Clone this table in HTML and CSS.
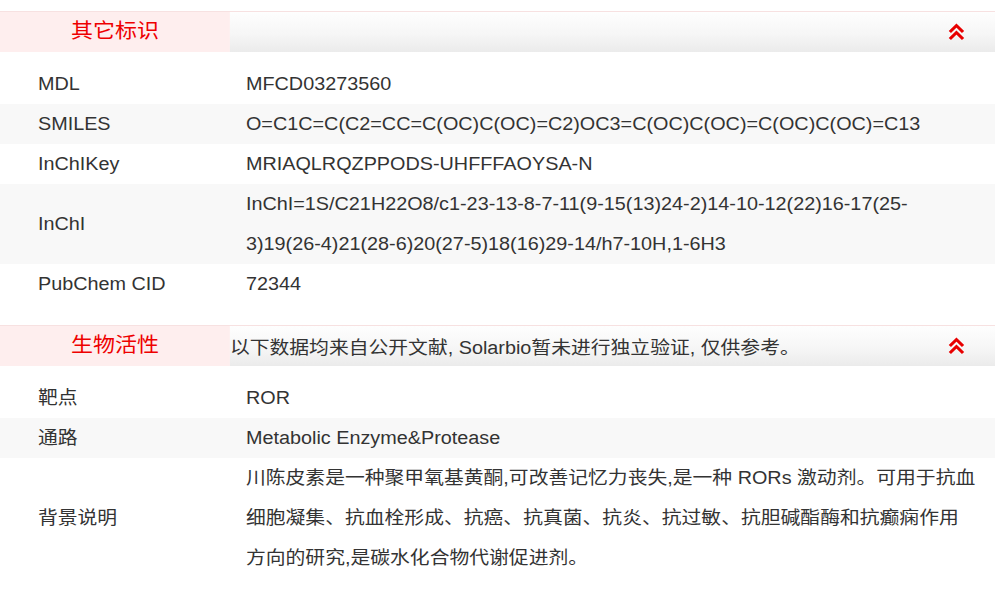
FILE: index.html
```html
<!DOCTYPE html>
<html lang="zh-CN">
<head>
<meta charset="utf-8">
<title>其它标识</title>
<link rel="stylesheet" href="styles.css">
</head>
<body>
<div class="page">
  <section class="sec">
    <div class="sec-head">
      <div class="sec-title">其它标识</div>
      <div class="sec-bar">
        <span class="sec-note"></span>
        <svg class="toggle" viewBox="0 0 15 18" width="15" height="18"><polyline points="1.5,9 7.5,2.5 13.5,9"/><polyline points="1.5,16 7.5,9.5 13.5,16"/></svg>
      </div>
    </div>
    <div class="rows">
      <div class="row"><div class="k">MDL</div><div class="v">MFCD03273560</div></div>
      <div class="row"><div class="k">SMILES</div><div class="v">O=C1C=C(C2=CC=C(OC)C(OC)=C2)OC3=C(OC)C(OC)=C(OC)C(OC)=C13</div></div>
      <div class="row"><div class="k">InChIKey</div><div class="v">MRIAQLRQZPPODS-UHFFFAOYSA-N</div></div>
      <div class="row"><div class="k">InChI</div><div class="v">InChI=1S/C21H22O8/c1-23-13-8-7-11(9-15(13)24-2)14-10-12(22)16-17(25-<wbr>3)19(26-4)21(28-6)20(27-5)18(16)29-14/h7-10H,1-6H3</div></div>
      <div class="row"><div class="k">PubChem CID</div><div class="v">72344</div></div>
    </div>
  </section>
  <section class="sec">
    <div class="sec-head">
      <div class="sec-title">生物活性</div>
      <div class="sec-bar">
        <span class="sec-note">以下数据均来自公开文献, Solarbio暂未进行独立验证, 仅供参考。</span>
        <svg class="toggle" viewBox="0 0 15 18" width="15" height="18"><polyline points="1.5,9 7.5,2.5 13.5,9"/><polyline points="1.5,16 7.5,9.5 13.5,16"/></svg>
      </div>
    </div>
    <div class="rows">
      <div class="row"><div class="k">靶点</div><div class="v">ROR</div></div>
      <div class="row"><div class="k">通路</div><div class="v">Metabolic Enzyme&amp;Protease</div></div>
      <div class="row"><div class="k">背景说明</div><div class="v">川陈皮素是一种聚甲氧基黄酮,可改善记忆力丧失,是一种 RORs 激动剂。可用于抗血细胞凝集、抗血栓形成、抗癌、抗真菌、抗炎、抗过敏、抗胆碱酯酶和抗癫痫作用方向的研究,是碳水化合物代谢促进剂。</div></div>
    </div>
  </section>
</div>
</body>
</html>
```

FILE: styles.css
```css
html, body {
  margin: 0;
  padding: 0;
  background: #fff;
}

body {
  font-family: "Liberation Sans", Arial, "Noto Sans CJK SC", sans-serif;
  font-size: 18px;
  color: #333;
  overflow: hidden;
}

.page {
  width: 904.5px;
  padding-top: 11px;
  transform: scaleX(1.1);
  transform-origin: 0 0;
}

.sec {
  margin-bottom: 21px;
}

.sec-head {
  display: flex;
  height: 40px;
  border-top: 1px solid #f7e1e1;
}

.sec-title {
  width: 209px;
  flex: none;
  background: #feeeee;
  color: #ee0000;
  font-size: 20px;
  line-height: 39px;
  text-align: center;
}

.sec-bar {
  flex: 1;
  display: flex;
  align-items: center;
  justify-content: space-between;
  padding-right: 28px;
  background: linear-gradient(to bottom, #fefefe 0%, #f6f6f6 55%, #ebebeb 100%);
}

.sec-note {
  font-size: 18px;
  color: #333;
}

.toggle {
  fill: none;
  stroke: #e80000;
  stroke-width: 2.8;
  stroke-linecap: butt;
  stroke-linejoin: miter;
}

.rows {
  padding-top: 12px;
}

.row {
  display: grid;
  grid-template-columns: 223.6px 1fr;
  align-items: center;
  line-height: 40px;
}

.row:nth-child(even) {
  background: #f8f8f8;
}

.k {
  padding-left: 34.5px;
}

.v {
  padding-right: 16px;
}
```
